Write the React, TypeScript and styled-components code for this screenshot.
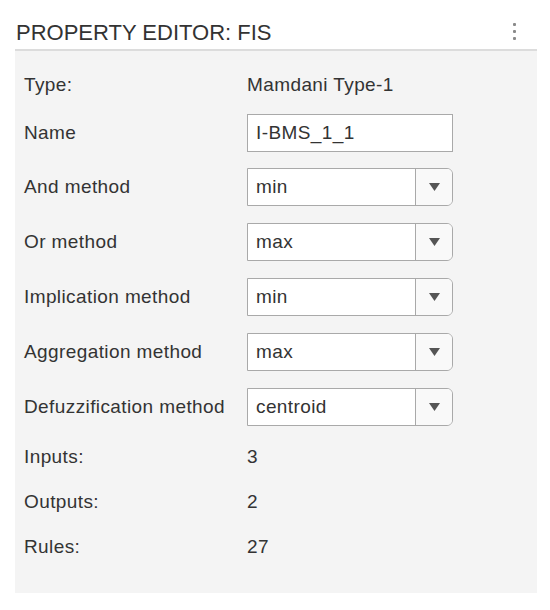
import React from "react";
import styled, { createGlobalStyle } from "styled-components";

const Global = createGlobalStyle`
  html, body { margin: 0; padding: 0; background: #ffffff; }
  body { font-family: "Liberation Sans", Arial, sans-serif; color: #333333; }
`;

const Wrap = styled.div`
  width: 550px;
  height: 610px;
  padding-left: 15px;
  box-sizing: border-box;
`;

const Header = styled.div`
  width: 522px;
  height: 51px;
  box-sizing: border-box;
  display: flex;
  align-items: flex-end;
  justify-content: space-between;
  padding: 0 0 3px 1px;
  border-bottom: 2px solid #dcdcdc;
`;

const Title = styled.div`
  font-size: 22px;
  color: #333;
`;

const Kebab = styled.div`
  display: flex;
  flex-direction: column;
  gap: 4px;
  margin-right: 21px;
  margin-bottom: 6px;
  span {
    width: 3px;
    height: 3px;
    background: #8a8a8a;
    border-radius: 1px;
  }
`;

const Panel = styled.div`
  width: 522px;
  height: 542px;
  box-sizing: border-box;
  background: #f4f4f4;
  padding: 11px 0 0 9px;
  display: flex;
  flex-direction: column;
`;

const heights = { text: 45, input: 52, select: 55 } as const;

const Row = styled.div<{ $kind: keyof typeof heights }>`
  height: ${(p) => heights[p.$kind]}px;
  display: grid;
  grid-template-columns: 223px 206px;
  align-items: center;
  font-size: 19px;
  letter-spacing: 0.4px;
`;

const Label = styled.div`
  color: #333;
`;

const Value = styled.div`
  color: #333;
`;

const TextBox = styled.div`
  height: 38px;
  box-sizing: border-box;
  border: 1px solid #a9a9a9;
  background: #fff;
  display: flex;
  align-items: center;
  padding-left: 8px;
  color: #333;
`;

const Select = styled.div`
  height: 38px;
  box-sizing: border-box;
  border: 1px solid #a9a9a9;
  border-radius: 0 6px 6px 0;
  background: #fff;
  display: grid;
  grid-template-columns: 1fr 37px;
`;

const SelectText = styled.div`
  display: flex;
  align-items: center;
  padding-left: 8px;
  color: #333;
`;

const Arrow = styled.div`
  border-left: 1px solid #a9a9a9;
  display: flex;
  align-items: center;
  justify-content: center;
  background: #f9f9f9;
  border-radius: 0 5px 5px 0;
`;

const Tri = () => (
  <svg width="11" height="8" viewBox="0 0 11 8">
    <path d="M0 0 H11 L5.5 8 Z" fill="#555" />
  </svg>
);

type Item = { kind: "text" | "input" | "select"; label: string; value: string };

const items: Item[] = [
  { kind: "text", label: "Type:", value: "Mamdani Type-1" },
  { kind: "input", label: "Name", value: "I-BMS_1_1" },
  { kind: "select", label: "And method", value: "min" },
  { kind: "select", label: "Or method", value: "max" },
  { kind: "select", label: "Implication method", value: "min" },
  { kind: "select", label: "Aggregation method", value: "max" },
  { kind: "select", label: "Defuzzification method", value: "centroid" },
  { kind: "text", label: "Inputs:", value: "3" },
  { kind: "text", label: "Outputs:", value: "2" },
  { kind: "text", label: "Rules:", value: "27" },
];

export default function App() {
  return (
    <>
      <Global />
      <Wrap>
        <Header>
          <Title>PROPERTY EDITOR: FIS</Title>
          <Kebab>
            <span />
            <span />
            <span />
          </Kebab>
        </Header>
        <Panel>
          {items.map((it) => (
            <Row key={it.label} $kind={it.kind}>
              <Label>{it.label}</Label>
              {it.kind === "text" && <Value>{it.value}</Value>}
              {it.kind === "input" && <TextBox>{it.value}</TextBox>}
              {it.kind === "select" && (
                <Select>
                  <SelectText>{it.value}</SelectText>
                  <Arrow>
                    <Tri />
                  </Arrow>
                </Select>
              )}
            </Row>
          ))}
        </Panel>
      </Wrap>
    </>
  );
}
